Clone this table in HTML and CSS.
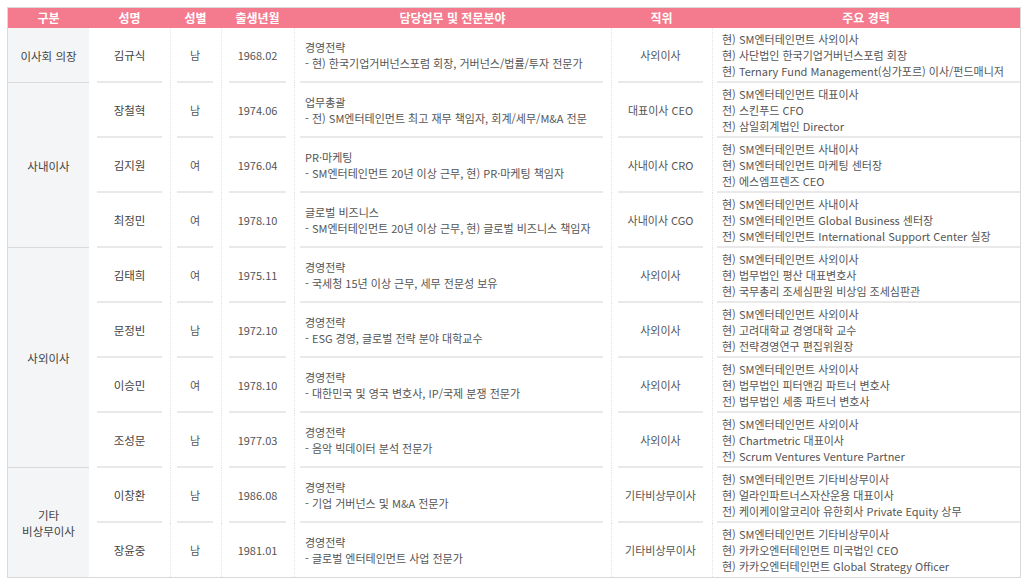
FILE: index.html
```html
<!DOCTYPE html>
<html lang="ko">
<head>
<meta charset="utf-8">
<link rel="stylesheet" href="styles.css">
</head>
<body>
<div class="wrap">
<table class="board">
<colgroup>
<col class="w1"><col class="w2"><col class="w3"><col class="w4"><col class="w5"><col class="w6"><col class="w7">
</colgroup>
<thead>
<tr><th>구분</th><th>성명</th><th>성별</th><th>출생년월</th><th>담당업무 및 전문분야</th><th>직위</th><th>주요 경력</th></tr>
</thead>
<tbody>
<tr>
<td class="grp sep">이사회 의장</td>
<td class="name"><div class="c">김규식</div></td>
<td class="d"><div class="c">남</div></td>
<td class="d date"><div class="c">1968.02</div></td>
<td class="d job"><div class="c l">경영전략<br>- 현) 한국기업거버넌스포럼 회장, 거버넌스/법률/투자 전문가</div></td>
<td class="d pos"><div class="c">사외이사</div></td>
<td class="d car"><div class="c l">현) SM엔터테인먼트 사외이사<br>현) 사단법인 한국기업거버넌스포럼 회장<br>현) Ternary Fund Management(싱가포르) 이사/펀드매니저</div></td>
</tr>
<tr>
<td class="grp sep" rowspan="3">사내이사</td>
<td class="name"><div class="c">장철혁</div></td>
<td class="d"><div class="c">남</div></td>
<td class="d date"><div class="c">1974.06</div></td>
<td class="d job"><div class="c l">업무총괄<br>- 전) SM엔터테인먼트 최고 재무 책임자, 회계/세무/M&amp;A 전문</div></td>
<td class="d pos"><div class="c">대표이사 CEO</div></td>
<td class="d car"><div class="c l">현) SM엔터테인먼트 대표이사<br>전) 스킨푸드 CFO<br>전) 삼일회계법인 Director</div></td>
</tr>
<tr>
<td class="name"><div class="c">김지원</div></td>
<td class="d"><div class="c">여</div></td>
<td class="d date"><div class="c">1976.04</div></td>
<td class="d job"><div class="c l">PR·마케팅<br>- SM엔터테인먼트 20년 이상 근무, 현) PR·마케팅 책임자</div></td>
<td class="d pos"><div class="c">사내이사 CRO</div></td>
<td class="d car"><div class="c l">현) SM엔터테인먼트 사내이사<br>현) SM엔터테인먼트 마케팅 센터장<br>전) 에스엠프렌즈 CEO</div></td>
</tr>
<tr>
<td class="name"><div class="c">최정민</div></td>
<td class="d"><div class="c">여</div></td>
<td class="d date"><div class="c">1978.10</div></td>
<td class="d job"><div class="c l">글로벌 비즈니스<br>- SM엔터테인먼트 20년 이상 근무, 현) 글로벌 비즈니스 책임자</div></td>
<td class="d pos"><div class="c">사내이사 CGO</div></td>
<td class="d car"><div class="c l">현) SM엔터테인먼트 사내이사<br>전) SM엔터테인먼트 Global Business 센터장<br>전) SM엔터테인먼트 International Support Center 실장</div></td>
</tr>
<tr>
<td class="grp sep" rowspan="4">사외이사</td>
<td class="name"><div class="c">김태희</div></td>
<td class="d"><div class="c">여</div></td>
<td class="d date"><div class="c">1975.11</div></td>
<td class="d job"><div class="c l">경영전략<br>- 국세청 15년 이상 근무, 세무 전문성 보유</div></td>
<td class="d pos"><div class="c">사외이사</div></td>
<td class="d car"><div class="c l">현) SM엔터테인먼트 사외이사<br>현) 법무법인 평산 대표변호사<br>현) 국무총리 조세심판원 비상임 조세심판관</div></td>
</tr>
<tr>
<td class="name"><div class="c">문정빈</div></td>
<td class="d"><div class="c">남</div></td>
<td class="d date"><div class="c">1972.10</div></td>
<td class="d job"><div class="c l">경영전략<br>- ESG 경영, 글로벌 전략 분야 대학교수</div></td>
<td class="d pos"><div class="c">사외이사</div></td>
<td class="d car"><div class="c l">현) SM엔터테인먼트 사외이사<br>현) 고려대학교 경영대학 교수<br>현) 전략경영연구 편집위원장</div></td>
</tr>
<tr>
<td class="name"><div class="c">이승민</div></td>
<td class="d"><div class="c">여</div></td>
<td class="d date"><div class="c">1978.10</div></td>
<td class="d job"><div class="c l">경영전략<br>- 대한민국 및 영국 변호사, IP/국제 분쟁 전문가</div></td>
<td class="d pos"><div class="c">사외이사</div></td>
<td class="d car"><div class="c l">현) SM엔터테인먼트 사외이사<br>현) 법무법인 피터앤김 파트너 변호사<br>전) 법무법인 세종 파트너 변호사</div></td>
</tr>
<tr>
<td class="name"><div class="c">조성문</div></td>
<td class="d"><div class="c">남</div></td>
<td class="d date"><div class="c">1977.03</div></td>
<td class="d job"><div class="c l">경영전략<br>- 음악 빅데이터 분석 전문가</div></td>
<td class="d pos"><div class="c">사외이사</div></td>
<td class="d car"><div class="c l">현) SM엔터테인먼트 사외이사<br>현) Chartmetric 대표이사<br>전) Scrum Ventures Venture Partner</div></td>
</tr>
<tr>
<td class="grp" rowspan="2">기타<br>비상무이사</td>
<td class="name"><div class="c">이창환</div></td>
<td class="d"><div class="c">남</div></td>
<td class="d date"><div class="c">1986.08</div></td>
<td class="d job"><div class="c l">경영전략<br>- 기업 거버넌스 및 M&amp;A 전문가</div></td>
<td class="d pos"><div class="c">기타비상무이사</div></td>
<td class="d car"><div class="c l">현) SM엔터테인먼트 기타비상무이사<br>현) 얼라인파트너스자산운용 대표이사<br>전) 케이케이알코리아 유한회사 Private Equity 상무</div></td>
</tr>
<tr class="last">
<td class="name"><div class="c">장윤중</div></td>
<td class="d"><div class="c">남</div></td>
<td class="d date"><div class="c">1981.01</div></td>
<td class="d job"><div class="c l">경영전략<br>- 글로벌 엔터테인먼트 사업 전문가</div></td>
<td class="d pos"><div class="c">기타비상무이사</div></td>
<td class="d car"><div class="c l">현) SM엔터테인먼트 기타비상무이사<br>현) 카카오엔터테인먼트 미국법인 CEO<br>현) 카카오엔터테인먼트 Global Strategy Officer</div></td>
</tr>
</tbody>
</table>
</div>
</body>
</html>
```

FILE: styles.css
```css
html, body {
  margin: 0;
  padding: 0;
  background: #ffffff;
}
body {
  padding: 7px 0 0 7px;
  font-family: "Noto Sans CJK KR", "Noto Sans", sans-serif;
  color: #555555;
}
.wrap {
  width: 1014px;
  box-sizing: border-box;
  border: 1px solid #d9d9d9;
}
.board {
  width: 1012px;
  table-layout: fixed;
  border-collapse: separate;
  border-spacing: 0;
  font-size: 11px;
  line-height: 16px;
}
.w1 { width: 81px; }
.w2 { width: 81px; }
.w3 { width: 51px; }
.w4 { width: 73px; }
.w5 { width: 317px; }
.w6 { width: 101px; }
.w7 { width: 308px; }

.board th {
  height: 20px;
  padding: 0;
  background: #f47b8d;
  color: #ffffff;
  font-weight: 700;
  font-size: 12px;
  line-height: 20px;
  text-align: center;
}
.board tbody tr { height: 55px; }
.board tbody tr.last { height: 54px; }
.board td {
  padding: 0;
  vertical-align: middle;
}
.grp {
  background: #f4f5f7;
  text-align: center;
  color: #444444;
  font-size: 11.5px;
}
.grp.sep {
  box-shadow: inset 0 -1px 0 #dadada;
}
.name { padding: 0 8px !important; }
.d { border-left: 1px dotted #e3e3e3; }
.d { padding: 0 8px 0 6px !important; }
.date { padding: 0 8px 0 7px !important; }
.job { padding: 0 8px 0 5px !important; }
.pos { padding: 0 9px 0 6px !important; }
.car { padding: 0 0 0 4px !important; }

.c {
  height: 53px;
  border-bottom: 2px solid #e9e9e9;
  display: flex;
  align-items: center;
  justify-content: center;
  text-align: center;
  white-space: nowrap;
}
.name .c { color: #444444; font-size: 11.5px; }
.c.l {
  justify-content: flex-start;
  text-align: left;
  padding-left: 5px;
}
.last .c {
  height: 54px;
  border-bottom: 0;
}
```
